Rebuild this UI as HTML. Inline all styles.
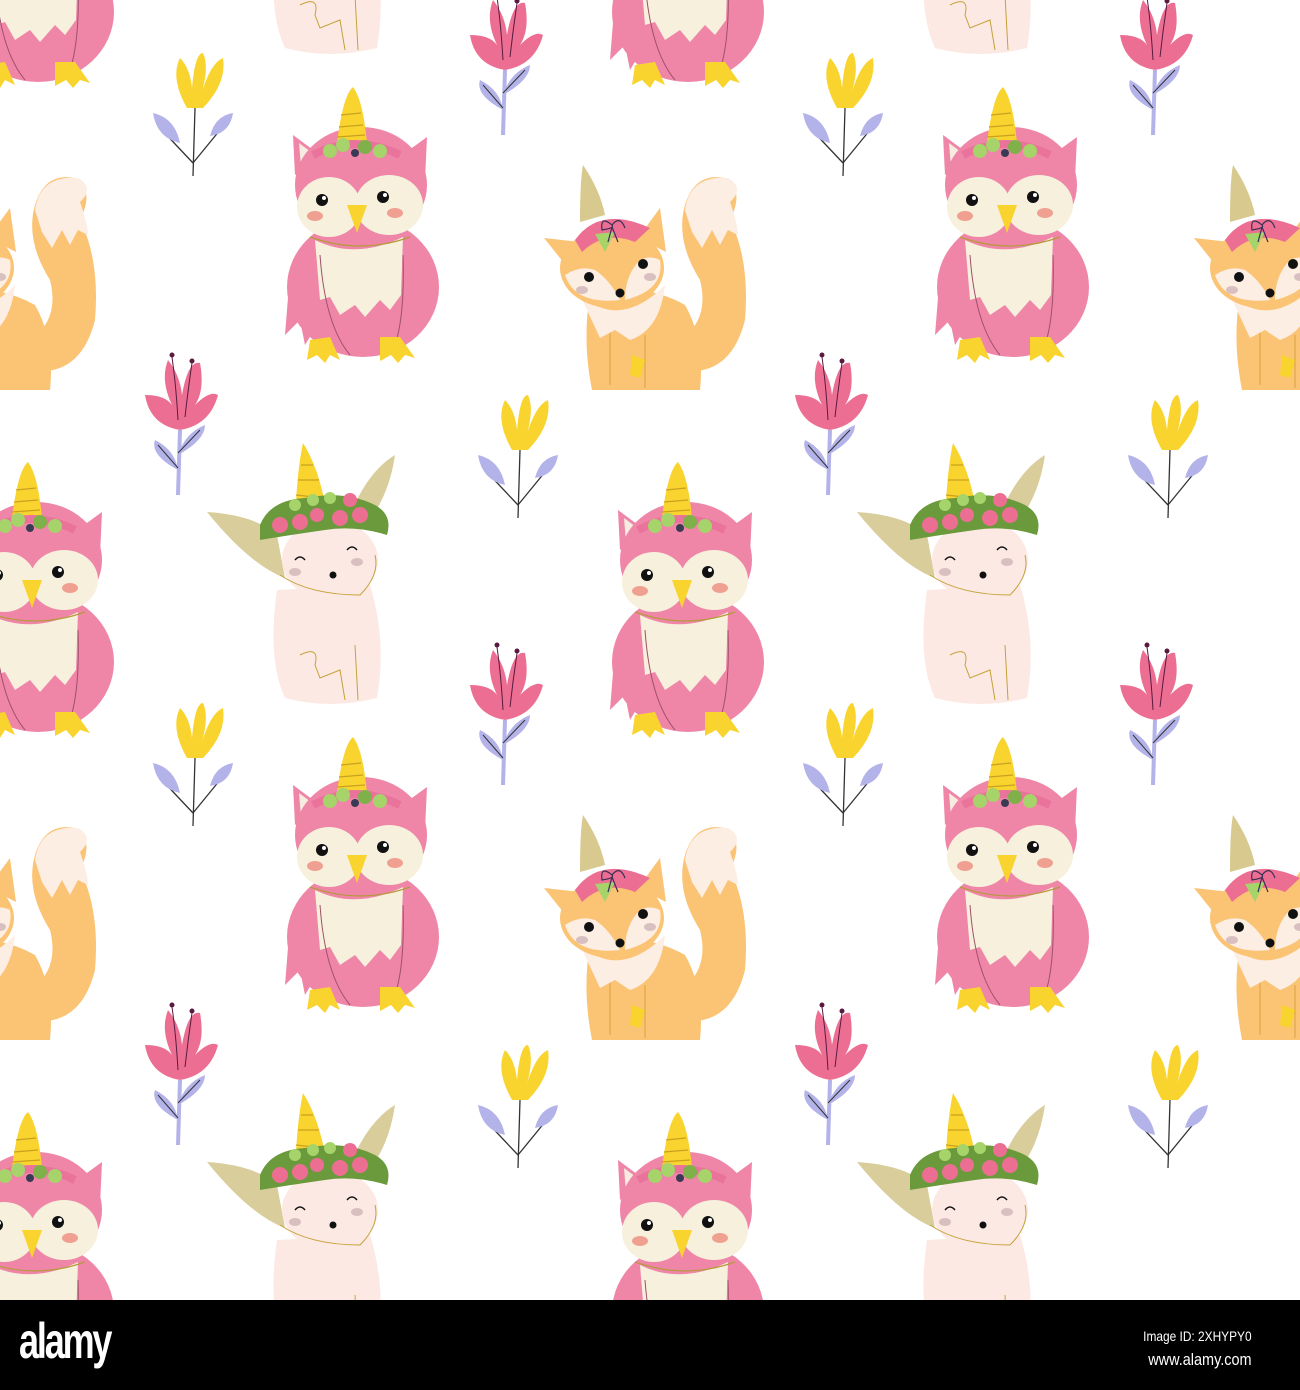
<!DOCTYPE html>
<html><head><meta charset="utf-8"><style>
html,body{margin:0;padding:0;background:#fff}
.wrap{position:relative;width:1300px;height:1390px;overflow:hidden;background:#fff}
svg{position:absolute;left:0;top:0}
.bar{position:absolute;left:0;top:1300px;width:1300px;height:90px;background:#000;color:#fff;font-family:"Liberation Sans",sans-serif}
.logo{position:absolute;left:19px;top:12px;font-size:50px;font-weight:bold;letter-spacing:-3px;transform:scaleX(0.72);transform-origin:left top}
.id{position:absolute;right:48px;top:28px;font-size:14px;transform:scaleX(0.85);transform-origin:right top}
.www{position:absolute;right:48px;top:50px;font-size:17px;transform:scaleX(0.85);transform-origin:right top}
</style></head><body><div class="wrap">
<svg width="1300" height="1300" viewBox="0 0 1300 1300">
<defs>
<g id="owl">
 <polygon points="-70,-50 -72,-90 -45,-70" fill="#ef86a8"/>
 <polygon points="-64,-58 -66,-82 -50,-70" fill="#f6ece0"/>
 <polygon points="40,-72 62,-88 60,-45" fill="#ef86a8"/>
 <ellipse cx="-2" cy="62" rx="76" ry="70" fill="#ef86a8"/>
 <path d="M-76,60 L-80,110 L-65,95 L-60,120 L-48,100 L-30,125 L-20,95 Z" fill="#ef86a8"/>
 <ellipse cx="-4" cy="-40" rx="66" ry="58" fill="#ef86a8"/>
 <ellipse cx="-36" cy="-18" rx="32" ry="30" fill="#f6f0dc"/>
 <ellipse cx="24" cy="-20" rx="34" ry="30" fill="#f6f0dc"/>
 <path d="M-50,15 Q-10,35 38,12 L36,70 L25,85 L15,75 L0,92 L-10,80 L-25,90 L-35,72 L-45,75 Z" fill="#f6f0dc"/>
 <path d="M-55,12 Q-5,30 45,12" stroke="#b59a3a" stroke-width="1.2" fill="none"/>
 <path d="M-45,30 Q-40,100 -15,130 M38,30 Q40,90 30,120" stroke="#a0506a" stroke-width="1" fill="none"/>
 <path d="M-28,-82 Q-22,-130 -12,-138 Q-2,-125 2,-82 Z" fill="#f9d42f"/>
 <path d="M-24,-110 L-4,-112 M-26,-98 L-2,-100 M-28,-88 L0,-90" stroke="#c9a020" stroke-width="1.2"/>
 <path d="M-52,-70 Q-10,-92 35,-70" stroke="#e9739b" stroke-width="8" fill="none"/>
 <circle cx="-35" cy="-74" r="7" fill="#a6d36a"/><circle cx="-22" cy="-80" r="7" fill="#a6d36a"/><circle cx="0" cy="-78" r="7" fill="#7fb04a"/><circle cx="15" cy="-74" r="7" fill="#a6d36a"/><circle cx="-10" cy="-72" r="4" fill="#3a3a55"/>
 <circle cx="-43" cy="-25" r="6" fill="#111"/><circle cx="-41" cy="-27" r="2" fill="#fff"/>
 <circle cx="18" cy="-28" r="6" fill="#111"/><circle cx="20" cy="-30" r="2" fill="#fff"/>
 <ellipse cx="-50" cy="-9" rx="8" ry="5" fill="#f0a090"/><ellipse cx="30" cy="-12" rx="8" ry="5" fill="#f0a090"/>
 <polygon points="-18,-20 2,-20 -8,8" fill="#f9d42f"/>
 <path d="M-55,115 L-35,112 L-25,135 L-35,130 L-40,138 L-48,130 L-58,135 Z" fill="#f9d42f"/>
 <path d="M15,112 L35,112 L50,133 L40,130 L33,138 L26,130 L15,136 Z" fill="#f9d42f"/>
</g>
<g id="fox">
 <path d="M55,110 Q110,120 125,60 Q130,0 110,-40 Q125,-70 105,-82 Q75,-88 65,-55 Q55,-20 80,20 Q90,60 60,80 Z" fill="#fbc374"/>
 <path d="M65,-50 Q70,-85 108,-82 Q125,-72 110,-58 Q118,-35 118,-25 L108,-30 L100,-15 L92,-30 L82,-12 L72,-28 Z" fill="#fdeee4"/>
 <path d="M-30,35 Q20,20 65,45 Q85,80 80,130 L-28,130 Q-38,80 -30,35 Z" fill="#fbc374"/>
 <path d="M-10,125 L-10,70 M25,75 L25,128" stroke="#d9a040" stroke-width="1"/>
 <path d="M12,95 L25,100 L20,118 L10,115 Z" fill="#f9d42f"/>
 <path d="M-40,35 Q0,70 45,25 Q40,70 10,80 L-5,70 L-20,78 Z" fill="#fdeee4"/>
 <polygon points="-76,-22 -40,-18 -52,8" fill="#fbc374"/>
 <polygon points="40,-52 18,-22 46,-8" fill="#fbc374"/>
 <ellipse cx="-8" cy="8" rx="52" ry="40" fill="#fbc374"/>
 <path d="M-55,15 Q-45,45 0,40 Q-10,20 -25,10 Q-40,5 -55,15 Z" fill="#fdeee4"/>
 <path d="M40,0 Q45,30 5,40 Q5,15 20,0 Q30,-5 40,0 Z" fill="#fdeee4"/>
 <path d="M-40,-38 Q-40,-80 -37,-95 Q-20,-70 -15,-45 Z" fill="#d8c98e"/>
 <path d="M-45,-20 Q-20,-55 30,-32 L15,-18 Q-15,-30 -38,-8 Z" fill="#ec6f93"/>
 <path d="M-25,-26 L-15,-8 L-5,-28 Z" fill="#a6d36a"/>
 <path d="M-8,-35 Q-20,-45 -18,-30 Q-5,-32 -8,-35 Q0,-45 5,-32 M-8,-33 L-12,-18 M-8,-33 L-2,-18" stroke="#3a3055" stroke-width="1.2" fill="none"/>
 <circle cx="-31" cy="17" r="5" fill="#111"/><circle cx="23" cy="4" r="5" fill="#111"/>
 <circle cx="0" cy="33" r="4.5" fill="#111"/>
 <ellipse cx="-38" cy="30" rx="6" ry="4" fill="#d8c0c0"/><ellipse cx="30" cy="17" rx="6" ry="4" fill="#d8c0c0"/>
</g>
<g id="cat">
 <path d="M-48,30 Q-58,100 -40,138 Q5,150 52,138 Q62,80 45,25 Z" fill="#fde9e3"/>
 <path d="M-25,95 Q-5,85 -10,105 L-5,118 L15,110 L20,140 M30,85 L33,140" stroke="#c4a23a" stroke-width="1" fill="none"/>
 <path d="M-118,-48 Q-70,-45 -48,-25 L-40,18 Q-75,5 -118,-48 Z" fill="#d9cd9b"/>
 <path d="M70,-105 Q65,-70 48,-45 L28,-52 Q45,-90 70,-105 Z" fill="#d9cd9b"/>
 <ellipse cx="5" cy="0" rx="48" ry="40" fill="#fde9e3"/>
 <path d="M-45,15 Q-15,35 35,35 Q55,15 50,-5" stroke="#c4a23a" stroke-width="1" fill="none"/>
 <path d="M-30,-38 Q-28,-90 -22,-117 Q-5,-90 2,-45 Z" fill="#f9d42f"/>
 <path d="M-24,-95 L-12,-95 M-27,-80 L-6,-80 M-29,-65 L-2,-62" stroke="#c9a020" stroke-width="1.2"/>
 <path d="M-65,-35 Q-55,-60 -20,-62 Q20,-70 50,-55 Q68,-45 62,-25 Q30,-35 0,-30 Q-35,-25 -65,-20 Z" fill="#6a9a3c"/>
 <circle cx="-45" cy="-35" r="8" fill="#ec6f93"/><circle cx="-25" cy="-38" r="8" fill="#ec6f93"/><circle cx="-8" cy="-45" r="7" fill="#ec6f93"/><circle cx="15" cy="-42" r="8" fill="#ec6f93"/><circle cx="35" cy="-45" r="8" fill="#ec6f93"/><circle cx="25" cy="-60" r="7" fill="#ec6f93"/>
 <circle cx="-30" cy="-55" r="6" fill="#a6d36a"/><circle cx="-12" cy="-60" r="6" fill="#a6d36a"/><circle cx="5" cy="-62" r="6" fill="#a6d36a"/>
 <path d="M-30,0 Q-25,-6 -20,0 M22,-10 Q27,-16 32,-10" stroke="#111" stroke-width="1.5" fill="none"/>
 <circle cx="8" cy="15" r="3.5" fill="#111"/>
 <ellipse cx="-30" cy="12" rx="6" ry="4" fill="#d8c0c0"/><ellipse cx="32" cy="2" rx="6" ry="4" fill="#d8c0c0"/>
</g>
<g id="yfl">
 <path d="M-8,0 Q-25,-30 -15,-50 Q-5,-40 -3,-20 Q0,-55 8,-55 Q15,-40 5,-10 Q15,-45 28,-50 Q32,-25 8,0 Z" fill="#f9d42f"/>
 <path d="M0,0 L-2,68 M-2,55 L-35,20 M-2,55 L25,22" stroke="#333" stroke-width="1.3" fill="none"/>
 <path d="M-42,5 Q-20,10 -15,35 Q-38,30 -42,5 Z" fill="#b3b3ea"/>
 <path d="M38,5 Q20,8 15,28 Q35,25 38,5 Z" fill="#b3b3ea"/>
</g>
<g id="pfl">
 <path d="M0,25 Q-30,20 -35,-10 Q-15,-10 -8,0 Q-20,-25 -12,-45 Q0,-30 2,-10 Q8,-45 20,-42 Q25,-15 15,0 Q30,-15 38,-10 Q30,20 0,25 Z" fill="#ec6f93"/>
 <path d="M-8,-48 Q-4,-20 -2,15 M12,-42 Q8,-15 5,12" stroke="#5a1a40" stroke-width="1" fill="none"/>
 <circle cx="-8" cy="-50" r="2.5" fill="#5a1a40"/><circle cx="12" cy="-44" r="2.5" fill="#5a1a40"/>
 <path d="M0,25 L-2,90" stroke="#b3b3ea" stroke-width="4"/>
 <path d="M-2,65 Q-30,50 -25,35 Q-5,45 -2,65 Z M-2,50 Q25,35 25,20 Q5,28 -2,50 Z" fill="#b3b3ea"/>
 <path d="M-2,63 L-22,40 M-2,48 L20,25" stroke="#333" stroke-width="1"/>
</g>
<g id="tile">
 <use href="#yfl" x="195" y="108"/>
 <use href="#pfl" x="505" y="45"/>
 <use href="#pfl" x="180" y="405"/>
 <use href="#yfl" x="520" y="450"/>
 <use href="#cat" x="325" y="560"/>
 <use href="#owl" x="365" y="225"/>
 <use href="#owl" x="40" y="600"/>
 <use href="#fox" x="620" y="260"/>
</g>
</defs>
<use href="#tile" x="-650" y="-650"/><use href="#tile" x="0" y="-650"/><use href="#tile" x="650" y="-650"/>
<use href="#tile" x="-650" y="0"/><use href="#tile" x="0" y="0"/><use href="#tile" x="650" y="0"/>
<use href="#tile" x="-650" y="650"/><use href="#tile" x="0" y="650"/><use href="#tile" x="650" y="650"/>
</svg>
<div class="bar"><div class="logo">alamy</div><div class="id">Image ID: 2XHYPY0</div><div class="www">www.alamy.com</div></div>
</div></body></html>
